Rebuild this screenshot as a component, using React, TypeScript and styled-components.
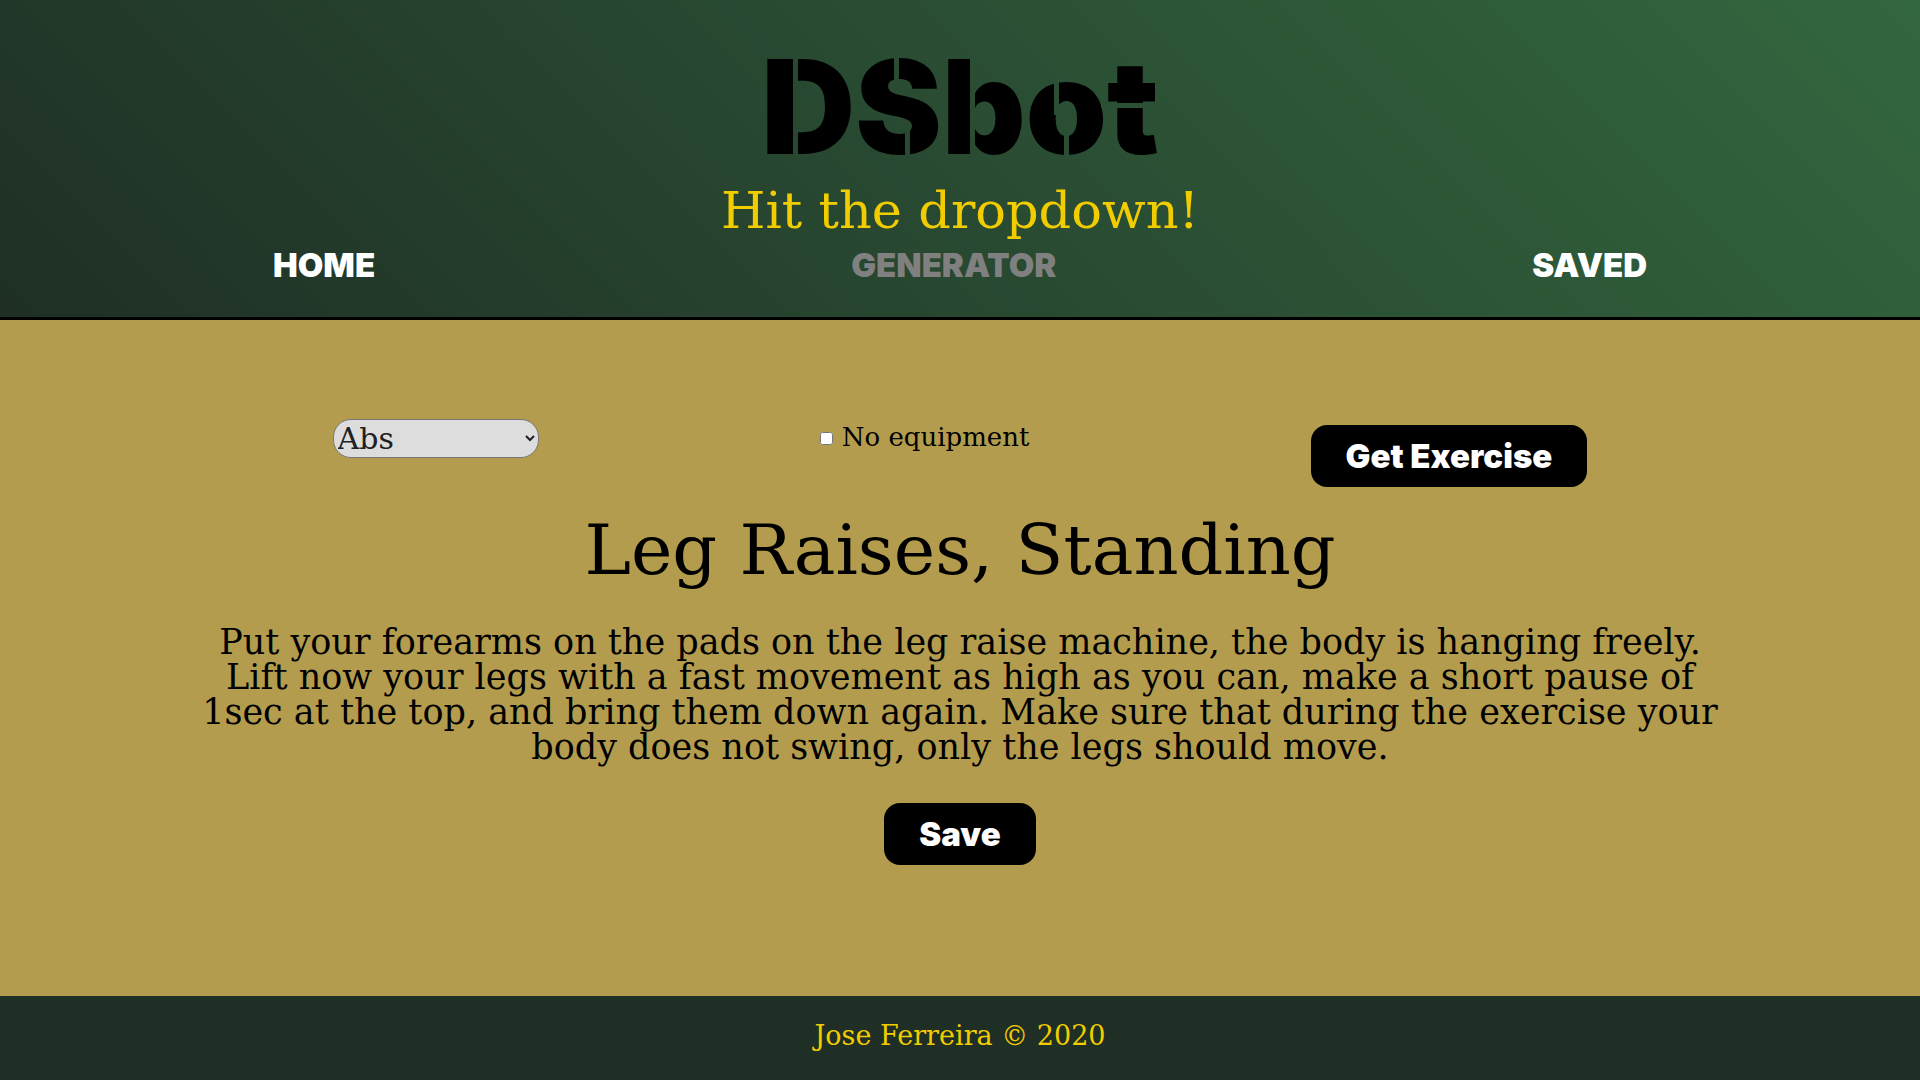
import React, { useState } from 'react';
import styled, { createGlobalStyle } from 'styled-components';

const typewriter = '"DejaVu Serif", "Liberation Serif", serif';
const display = 'Inter, "Liberation Sans", sans-serif';

const GlobalStyle = createGlobalStyle`
  *, *::before, *::after { box-sizing: border-box; }
  body {
    margin: 0;
    background: #b39c4d;
    color: #000;
    font-family: ${typewriter};
    font-size: 27px;
    line-height: 1;
  }
  h1, h2, p { margin: 0; font-weight: 400; }
`;

const Page = styled.div`
  min-height: 100vh;
  display: flex;
  flex-direction: column;
`;

const Header = styled.header`
  display: flex;
  flex-direction: column;
  align-items: center;
  padding: 37px 0 34px;
  border-bottom: 3px solid #000;
  background: linear-gradient(45deg, #1f2f25, #33673f);
`;

const cut = 'linear-gradient(#000, #000)';

/* The mask cuts the bridges of a stencil into the heavy letters. */
const Logo = styled.h1`
  font: 900 130px/140px ${display};
  mask:
    ${cut} 32px 0 / 5px 100% no-repeat,
    ${cut} 133px 0 / 5px 54px no-repeat,
    ${cut} 144px 84px / 5px 56px no-repeat,
    ${cut} 209px 0 / 5px 100% no-repeat,
    ${cut} 293px 0 / 5px 78px no-repeat,
    ${cut} 303px 90px / 5px 50px no-repeat,
    ${cut} 340px 66px / 60px 5px no-repeat,
    ${cut};
  mask-composite: exclude;
`;

const Tagline = styled.p`
  margin-top: 8px;
  color: #f0cc00;
  font-size: 51px;
`;

const Nav = styled.nav`
  align-self: stretch;
  display: flex;
  justify-content: space-around;
  margin-top: 11px;
  padding: 0 35px;
`;

const NavLink = styled.a<{ $current?: boolean }>`
  color: ${p => (p.$current ? '#808080' : '#fff')};
  font: 900 33px/36px ${display};
  text-transform: uppercase;
  text-decoration: none;
`;

const Main = styled.main`
  flex: 1;
  display: flex;
  flex-direction: column;
  align-items: center;
  padding: 99px 10% 60px;
`;

const Controls = styled.form`
  align-self: stretch;
  display: flex;
  justify-content: space-around;
  align-items: flex-start;
`;

const Select = styled.select`
  width: 206px;
  padding: 0;
  border: 1px solid #767676;
  border-radius: 18px;
  background: #ddd;
  color: #202020;
  font-family: ${typewriter};
  font-size: 30px;
`;

const CheckLabel = styled.label`
  display: flex;
  align-items: center;
  gap: 9px;
  padding-top: 5px;
  font-size: 26px;
`;

const Checkbox = styled.input`
  width: 13px;
  height: 13px;
  margin: 3px 0 0;
`;

const Button = styled.button`
  padding: 13px 35px;
  border: 0;
  border-radius: 16px;
  background: #000;
  color: #fff;
  font: 900 33px/36px ${display};
`;

const SubmitButton = styled(Button)`
  margin-top: 6px;
`;

const Exercise = styled.article`
  display: flex;
  flex-direction: column;
  align-items: center;
  margin-top: 28px;
  padding: 0 4px;
  text-align: center;
`;

const ExerciseName = styled.h2`
  font-size: 70px;
`;

const Description = styled.p`
  margin: 40px 0 38px;
  font-size: 35px;
`;

const Footer = styled.footer`
  padding: 26px 0 31px;
  background: #1f2f25;
  color: #f0cc00;
  text-align: center;
`;

const muscles = ['Abs', 'Arms', 'Back', 'Calves', 'Chest', 'Legs', 'Shoulders'];

export default function App() {
  const [muscle, setMuscle] = useState('Abs');
  const [noEquipment, setNoEquipment] = useState(false);

  return (
    <Page>
      <GlobalStyle />
      <Header>
        <Logo>DSbot</Logo>
        <Tagline>Hit the dropdown!</Tagline>
        <Nav>
          <NavLink href="#home">Home</NavLink>
          <NavLink href="#generator" $current aria-current="page">Generator</NavLink>
          <NavLink href="#saved">Saved</NavLink>
        </Nav>
      </Header>
      <Main>
        <Controls onSubmit={e => e.preventDefault()}>
          <Select aria-label="Muscle group" value={muscle} onChange={e => setMuscle(e.target.value)}>
            {muscles.map(m => <option key={m}>{m}</option>)}
          </Select>
          <CheckLabel>
            <Checkbox type="checkbox" checked={noEquipment} onChange={e => setNoEquipment(e.target.checked)} />
            No equipment
          </CheckLabel>
          <SubmitButton type="submit">Get Exercise</SubmitButton>
        </Controls>
        <Exercise>
          <ExerciseName>Leg Raises, Standing</ExerciseName>
          <Description>
            Put your forearms on the pads on the leg raise machine, the body is hanging freely. Lift now
            your legs with a fast movement as high as you can, make a short pause of 1sec at the top, and
            bring them down again. Make sure that during the exercise your body does not swing, only the
            legs should move.
          </Description>
          <Button type="button">Save</Button>
        </Exercise>
      </Main>
      <Footer>Jose Ferreira © 2020</Footer>
    </Page>
  );
}
